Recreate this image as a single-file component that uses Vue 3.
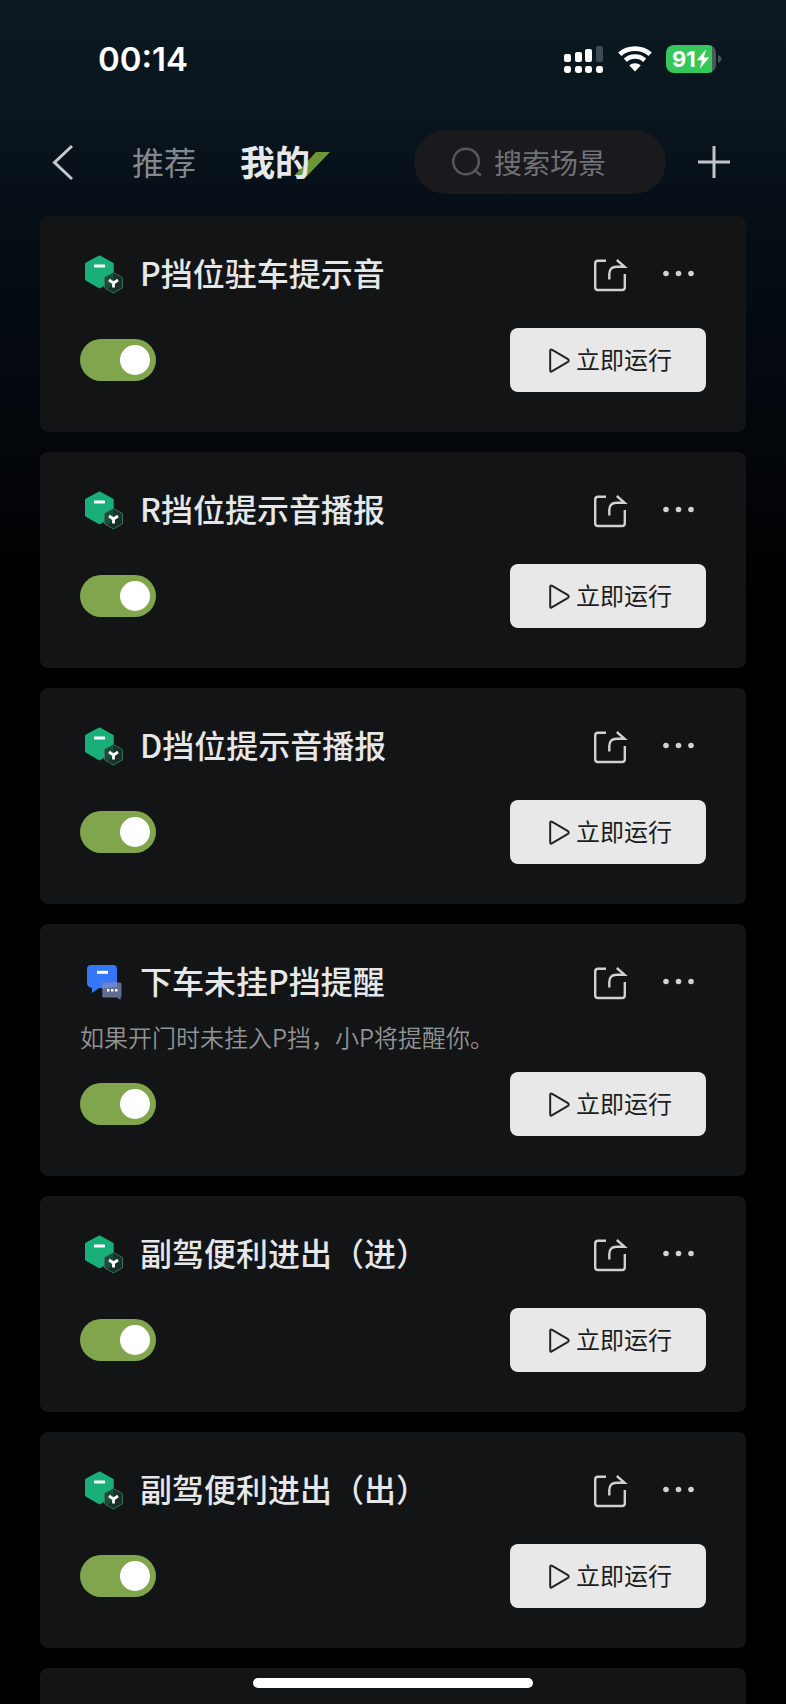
<template>
  <div class="page">
    <header class="status-bar">
      <span class="time">00:14</span>
      <div class="status-icons">
        <!-- signal -->
        <svg width="40" height="28" viewBox="0 0 40 28" fill="#fff" aria-hidden="true">
          <rect x="0" y="9" width="7" height="8" rx="2" />
          <rect x="11" y="7" width="7" height="10" rx="2" />
          <rect x="21" y="4" width="7" height="13" rx="2" />
          <rect x="32" y="1" width="7" height="16" rx="2" fill="#3f4951" />
          <rect x="0" y="21" width="7" height="7" rx="2.4" />
          <rect x="11" y="21" width="7" height="7" rx="2.4" />
          <rect x="21" y="21" width="7" height="7" rx="2.4" />
          <rect x="32" y="21" width="7" height="7" rx="2.4" />
        </svg>
        <!-- wifi -->
        <svg width="34" height="28" viewBox="0 0 34 28" aria-hidden="true">
          <path d="M1.800 9.300C10.200 1.700 23.800 1.700 32.200 9.300" fill="none" stroke="#fff" stroke-width="4.8" />
          <path d="M7.300 15.200C12.800 10.200 21.200 10.200 26.700 15.200" fill="none" stroke="#fff" stroke-width="4.6" />
          <path d="M11.300 20.600C14.500 17.600 19.500 17.600 22.700 20.600L17 26.400Z" fill="#fff" />
        </svg>
        <div class="battery">
          <span class="battery-body">
            <span>91</span>
            <svg width="14" height="20" viewBox="0 0 12 18" fill="#fff" aria-hidden="true">
              <path d="M8.600 0.500L0.400 10.200H5L3.200 17.500L11.600 7.600H6.800Z" />
            </svg>
          </span>
          <svg width="4" height="10" viewBox="0 0 4 10" aria-hidden="true">
            <path d="M0 1C4.600 2.400 4.600 7.600 0 9Z" fill="#4a525a" />
          </svg>
        </div>
      </div>
    </header>

    <nav class="nav">
      <button class="icon-button" aria-label="返回">
        <svg width="32" height="40" viewBox="0 0 32 40" fill="none" stroke="#c6c9cc" stroke-width="3">
          <path d="M24 4L6.500 20.500L24 37" />
        </svg>
      </button>
      <div class="tabs">
        <button class="tab">推荐</button>
        <button class="tab active">
          <svg class="tab-mark" width="36" height="24" viewBox="0 0 36 24" aria-hidden="true">
            <path d="M22 0H36L13 24H0Z" fill="#6b9638" />
          </svg>
          <span class="tab-text">我的</span>
        </button>
      </div>
      <label class="search">
        <svg width="32" height="32" viewBox="0 0 32 32" fill="none" stroke="#55575b" stroke-width="2.600" aria-hidden="true">
          <circle cx="14" cy="15.500" r="12.800" />
          <path d="M22 23.500L29 29.500" />
        </svg>
        <input v-model="keyword" type="text" placeholder="搜索场景" aria-label="搜索场景">
      </label>
      <button class="icon-button" aria-label="添加">
        <svg width="32" height="32" viewBox="0 0 32 32" stroke="#c3c6c8" stroke-width="3">
          <path d="M0 16H32M16 0V32" />
        </svg>
      </button>
    </nav>

    <main class="list">
      <section v-for="scene in scenes" :key="scene.id" class="card">
        <div class="card-head">
          <svg v-if="scene.icon === 'gear'" width="48" height="48" viewBox="0 0 48 48" aria-hidden="true">
            <path d="M19.500 3.800L33.200 11.300V28L19.500 36L5.500 28V11.300Z" fill="#18b078" stroke="#18b078" stroke-linejoin="round" />
            <rect x="14" y="12.500" width="11" height="3" rx="0.500" fill="#fff" />
            <path d="M33.500 20.500L42.500 25.600V35.800L33.500 41L24.500 35.800V25.600Z" fill="#17302a" stroke="#3c7060" stroke-linejoin="round" />
            <path d="M25 26L33.500 21.200V31L28 37.200L25 35.500Z" fill="#1b6b50" opacity="0.500" />
            <path d="M29 28L33.500 31L38 28M33.500 30.500V35.500" fill="none" stroke="#fff" stroke-width="2.800" />
          </svg>
          <svg v-else width="48" height="48" viewBox="0 0 48 48" aria-hidden="true">
            <path d="M11 5H33Q37 5 37 9V24Q37 28 33 28H19L12 33V28Q7 27 7 23V9Q7 5 11 5Z" fill="#3478fa" />
            <rect x="17" y="10.800" width="11" height="3" fill="#fff" />
            <path d="M23.500 22.500H40Q41.500 22.500 41.500 24V36.500Q41.500 37.500 40.500 37.500V40L37 37.500H23.500Q22.300 37.500 22.300 36.500V24Q22.300 22.500 23.500 22.500Z" fill="#626d92" />
            <path d="M23.500 22.500H37V26.500L22.300 29V24Q22.300 22.500 23.500 22.500Z" fill="#6a87d3" />
            <path d="M27 29H29.400V31.400H27ZM31 29H33.400V31.400H31ZM35 29H37.400V31.400H35Z" fill="#fff" />
          </svg>
          <h2 class="card-title">{{ scene.title }}</h2>
          <div class="card-actions">
            <button class="icon-button" aria-label="分享">
              <svg width="40" height="40" viewBox="0 0 40 40" fill="none" stroke="#d0d1d2" stroke-width="2.400">
                <path d="M16 4.800H8Q5.200 4.800 5.200 7.500V31.200Q5.200 34 8 34H32Q34.800 34 34.800 31.200V18" />
                <path d="M19.300 23.500V18Q19.300 10.700 26.500 10.700H34.500L26.800 4" />
              </svg>
            </button>
            <button class="icon-button" aria-label="更多">
              <svg width="40" height="40" viewBox="0 0 40 40" fill="#d0d1d2">
                <circle cx="8" cy="17.500" r="2.800" />
                <circle cx="20.500" cy="17.500" r="2.800" />
                <circle cx="33" cy="17.500" r="2.800" />
              </svg>
            </button>
          </div>
        </div>
        <p v-if="scene.desc" class="card-desc">{{ scene.desc }}</p>
        <div class="card-foot">
          <input v-model="scene.enabled" class="switch" type="checkbox" :aria-label="scene.title">
          <button class="run-button">
            <svg width="24" height="28" viewBox="0 0 24 28" fill="none" stroke="#222325" stroke-width="2" stroke-linejoin="round" aria-hidden="true">
              <path d="M2.200 6V25.200Q2.200 27.500 4.200 26.200L20 16.800Q21.500 15.500 20 14.200L4.200 4.800Q2.200 3.700 2.200 6Z" />
            </svg>
            <span>立即运行</span>
          </button>
        </div>
      </section>
      <section class="card card-next"></section>
    </main>

    <div class="home-indicator"></div>
  </div>
</template>

<script setup>
import { ref } from 'vue';

const keyword = ref('');

const scenes = ref([
  { id: 1, icon: 'gear', title: 'P挡位驻车提示音', enabled: true },
  { id: 2, icon: 'gear', title: 'R挡位提示音播报', enabled: true },
  { id: 3, icon: 'gear', title: 'D挡位提示音播报', enabled: true },
  { id: 4, icon: 'message', title: '下车未挂P挡提醒', desc: '如果开门时未挂入P挡，小P将提醒你。', enabled: true },
  { id: 5, icon: 'gear', title: '副驾便利进出（进）', enabled: true },
  { id: 6, icon: 'gear', title: '副驾便利进出（出）', enabled: true },
]);
</script>

<style>
body {
  margin: 0;
  background: #000;
}
</style>

<style scoped>
.page {
  display: flex;
  flex-direction: column;
  height: 100vh;
  overflow: hidden;
  background: linear-gradient(#0c1921 0, #09141c 130px, #060e16 220px, #040910 360px, #000 600px);
  color: #e6e7e8;
  font-family: "Noto Sans CJK SC", sans-serif;
}

.page * {
  box-sizing: border-box;
}

svg {
  display: block;
  flex: none;
}

button {
  padding: 0;
  border: none;
  background: none;
  color: inherit;
  font-family: inherit;
  cursor: pointer;
}

/* Barre d'état */
.status-bar {
  display: flex;
  flex: none;
  justify-content: space-between;
  align-items: center;
  height: 130px;
  padding: 0 64px 12px 98px;
  color: #fff;
  font-family: Inter, sans-serif;
}

.time {
  font-size: 33px;
  font-weight: 600;
  line-height: 40px;
}

.status-icons {
  display: flex;
  align-items: center;
  gap: 14px;
}

.battery {
  display: flex;
  align-items: center;
  gap: 2px;
}

.battery-body {
  display: flex;
  align-items: center;
  width: 50px;
  height: 28px;
  padding-left: 6px;
  border-radius: 8px;
  background: linear-gradient(to right, #35c759 46px, #4a5a5a 46px);
  font-size: 22px;
  font-weight: 700;
}

/* Navigation */
.nav {
  display: flex;
  flex: none;
  align-items: center;
  height: 64px;
  padding: 0 56px 0 48px;
}

.tabs {
  display: flex;
  align-items: center;
  gap: 44px;
  margin: 0 auto 0 52px;
  padding-bottom: 2px;
}

.tab {
  position: relative;
  color: #84898d;
  font-size: 32px;
  line-height: 48px;
}

.tab.active {
  color: #e6e8ea;
  font-size: 35px;
  font-weight: 700;
}

.tab-mark {
  position: absolute;
  top: 15px;
  right: -20px;
}

.tab-text {
  position: relative;
}

.search {
  display: flex;
  align-items: center;
  gap: 10px;
  width: 252px;
  height: 64px;
  margin-right: 32px;
  padding: 0 32px 0 38px;
  border-radius: 32px;
  background: #1a1a1e;
}

.search input {
  flex: 1;
  min-width: 0;
  padding: 0;
  border: none;
  outline: none;
  background: none;
  color: #e6e7e8;
  font-family: inherit;
  font-size: 28px;
}

.search input::placeholder {
  color: #717275;
}

/* Liste des scènes */
.list {
  display: flex;
  flex: 1;
  flex-direction: column;
  gap: 20px;
  min-height: 0;
  margin-top: 22px;
  padding: 0 40px;
  overflow: hidden;
}

.card {
  flex: none;
  padding: 36px 40px 40px;
  border-radius: 8px;
  background: #121415;
}

.card-head {
  display: flex;
  align-items: flex-start;
  gap: 12px;
  height: 48px;
}

.card-title {
  flex: 1;
  margin: 0;
  font-size: 32px;
  font-weight: 500;
  line-height: 40px;
}

.card-actions {
  display: flex;
  gap: 28px;
  padding: 4px 8px 0 0;
}

.card-desc {
  margin: 12px 0 -12px;
  padding-bottom: 2px;
  color: #929394;
  font-size: 24px;
  font-weight: 350;
  line-height: 34px;
}

.card-foot {
  display: flex;
  justify-content: space-between;
  align-items: center;
  margin-top: 28px;
}

.switch {
  display: flex;
  align-items: center;
  width: 76px;
  height: 42px;
  margin: 0;
  padding: 0 6px;
  border-radius: 21px;
  background: #4a4c4e;
  appearance: none;
  cursor: pointer;
}

.switch::before {
  content: "";
  width: 30px;
  height: 30px;
  border-radius: 50%;
  background: #fff;
}

.switch:checked {
  justify-content: flex-end;
  background: #80a54c;
}

.run-button {
  display: flex;
  justify-content: center;
  align-items: center;
  gap: 4px;
  width: 196px;
  height: 64px;
  padding: 0 0 3px 4px;
  border-radius: 8px;
  background: #e8e8e8;
  color: #1c1d1f;
  font-size: 24px;
}

.card-next {
  height: 216px;
}

.home-indicator {
  position: fixed;
  bottom: 16px;
  left: 50%;
  width: 280px;
  height: 10px;
  margin-left: -140px;
  border-radius: 5px;
  background: #fff;
}
</style>
